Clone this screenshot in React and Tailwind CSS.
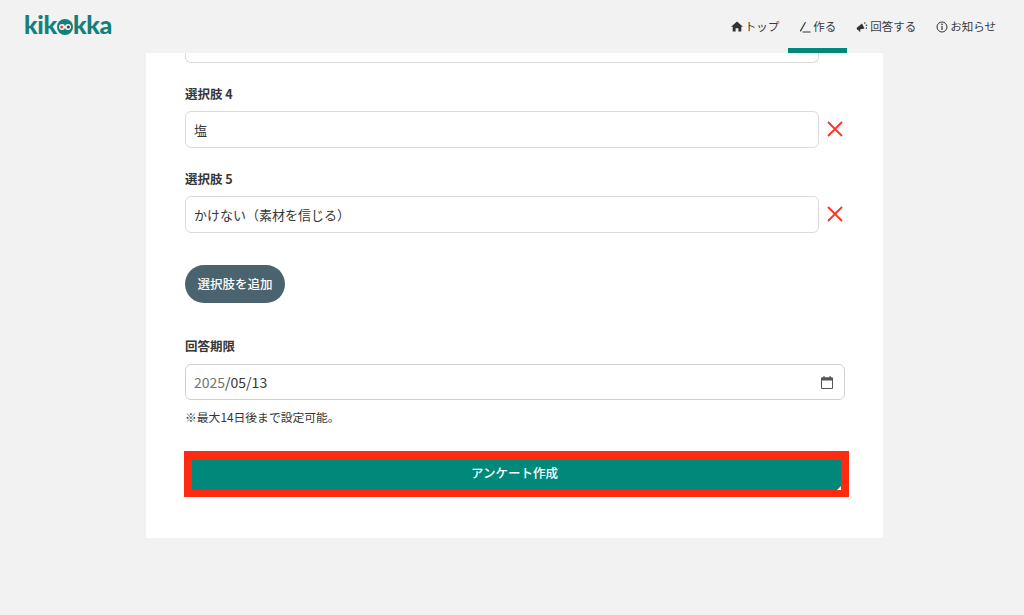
import React from "react";

function XIcon() {
  return (
    <svg width="18" height="18" viewBox="0 0 18 18" className="shrink-0 ml-[7px] mb-[1px]">
      <path d="M2 2 L16 16 M16 2 L2 16" stroke="#ff3323" strokeWidth="1.8" fill="none" />
    </svg>
  );
}

function NavItem({ icon, label, active }) {
  return (
    <div className="relative h-full flex items-center">
      <div className="flex items-center gap-[2px] text-[11.5px] text-[#3a3a3a]">
        {icon}
        <span>{label}</span>
      </div>
      {active && <div className="absolute -left-[11px] -right-[11px] bottom-0 h-[5px] bg-[#00897b]" />}
    </div>
  );
}

function Choice({ label, value }) {
  return (
    <div>
      <div className="text-[12.5px] leading-[18px] font-bold text-[#363636] mb-[8px]">{label}</div>
      <div className="flex items-center">
        <div className="w-[634px] h-[36.5px] border border-[#dbdbdb] rounded-[6px] bg-white px-[8px] flex items-center text-[13px] text-[#363636]">
          {value}
        </div>
        <XIcon />
      </div>
    </div>
  );
}

export default function App() {
  return (
    <div className="w-[1024px] h-[615px] overflow-hidden bg-[#f2f2f2] flex flex-col font-['Noto_Sans_CJK_JP','Noto_Sans',sans-serif]">
      <header className="h-[53px] shrink-0 flex items-center justify-between pl-[24px] pr-[28px]">
        <div className="flex items-center h-full pb-[5px] text-[#14807c] font-['Lato',sans-serif] font-black text-[25px] leading-none tracking-[-0.3px]">
          <span>kik</span>
          <span className="relative w-[16px] h-[16px] mt-[6px] shrink-0">
            <svg width="16" height="16" viewBox="0 0 16 16" className="absolute inset-0">
              <circle cx="8" cy="8" r="8" fill="#14807c" />
              <circle cx="5" cy="8" r="3" fill="#f4f4f4" />
              <circle cx="11" cy="8" r="3" fill="#f4f4f4" />
              <circle cx="4.7" cy="8" r="1.5" fill="#f0463c" />
              <circle cx="11.3" cy="8" r="1.5" fill="#3b3b3b" />
            </svg>
          </span>
          <span>kka</span>
        </div>
        <nav className="flex items-center h-full gap-[20px]">
          <NavItem
            label="トップ"
            icon={
              <svg width="12" height="11" viewBox="0 0 13 12">
                <path d="M6.5 0.5 L13 6.3 L11.2 6.3 L11.2 11.5 L8 11.5 L8 7.8 L5 7.8 L5 11.5 L1.8 11.5 L1.8 6.3 L0 6.3 Z" fill="#333" />
              </svg>
            }
          />
          <NavItem
            active
            label="作る"
            icon={
              <svg width="12" height="12" viewBox="0 0 12 12">
                <path d="M1 9.5 L6 1 L7 1.6 L2.2 10 L1 10.8 Z" fill="#333" />
                <path d="M3.5 11 L11.5 11" stroke="#333" strokeWidth="1" />
              </svg>
            }
          />
          <NavItem
            label="回答する"
            icon={
              <svg width="12" height="12" viewBox="0 0 12 12">
                <path d="M0.5 7 L6 2.5 L8.5 7.5 L4 8.5 L4.5 10.5 L3 10.5 L2.3 8.8 L1.3 9 Z" fill="#333" />
                <circle cx="8.8" cy="2" r="0.8" fill="#333" />
                <circle cx="10.5" cy="4.2" r="0.8" fill="#333" />
                <circle cx="10.4" cy="7" r="0.7" fill="#333" />
              </svg>
            }
          />
          <NavItem
            label="お知らせ"
            icon={
              <svg width="12" height="12" viewBox="0 0 12 12">
                <circle cx="6" cy="6" r="5" stroke="#333" strokeWidth="1" fill="none" />
                <path d="M6 5 L6 9" stroke="#333" strokeWidth="1.2" />
                <circle cx="6" cy="3.4" r="0.8" fill="#333" />
              </svg>
            }
          />
        </nav>
      </header>

      <main className="w-[737px] h-[485px] ml-[146px] bg-white pl-[39px] shrink-0">
        <div className="w-[634px] h-[10px] border border-t-0 border-[#dbdbdb] rounded-b-[6px]" />
        <div className="mt-[22px] flex flex-col gap-[22.5px]">
          <Choice label="選択肢 4" value="塩" />
          <Choice label="選択肢 5" value="かけない（素材を信じる）" />
        </div>
        <div className="mt-[32.5px] w-[100px] h-[38px] rounded-full bg-[#4a636f] text-white text-[12.5px] font-medium flex items-center justify-center">
          選択肢を追加
        </div>
        <div className="mt-[34px] text-[12.5px] leading-[18px] font-bold text-[#363636]">回答期限</div>
        <div className="mt-[9px] w-[660px] h-[36px] border border-[#d0d0d0] rounded-[6px] px-[8px] flex items-center justify-between text-[14px]">
          <span className="text-[#363636]">
            <span className="text-[#757575]">2025</span>/05/13
          </span>
          <svg width="12" height="13" viewBox="0 0 12 13" className="mr-[3px]">
            <path d="M0.5 2 H11.5 V12.5 H0.5 Z" fill="none" stroke="#555" strokeWidth="1" />
            <path d="M0.5 1.5 H11.5 V4.5 H0.5 Z" fill="#555" />
            <path d="M3 0 V2 M9 0 V2" stroke="#555" strokeWidth="1.2" />
          </svg>
        </div>
        <div className="mt-[8px] text-[11.8px] leading-[18px] text-[#363636]">※最大14日後まで設定可能。</div>
        <div className="relative mt-[25px] -ml-[1px] w-[665px] h-[46px] border-solid border-x-[8px] border-t-[9px] border-b-[7px] border-[#ff2a12] bg-[#00897b] text-white text-[12.5px] font-medium flex items-center justify-center pr-[4px] pb-[3px]">
          アンケート作成
          <svg width="4" height="4" viewBox="0 0 4 4" className="absolute right-0 bottom-0">
            <path d="M4 0 V4 H0 Z" fill="#ffffff" />
          </svg>
        </div>
      </main>
    </div>
  );
}
